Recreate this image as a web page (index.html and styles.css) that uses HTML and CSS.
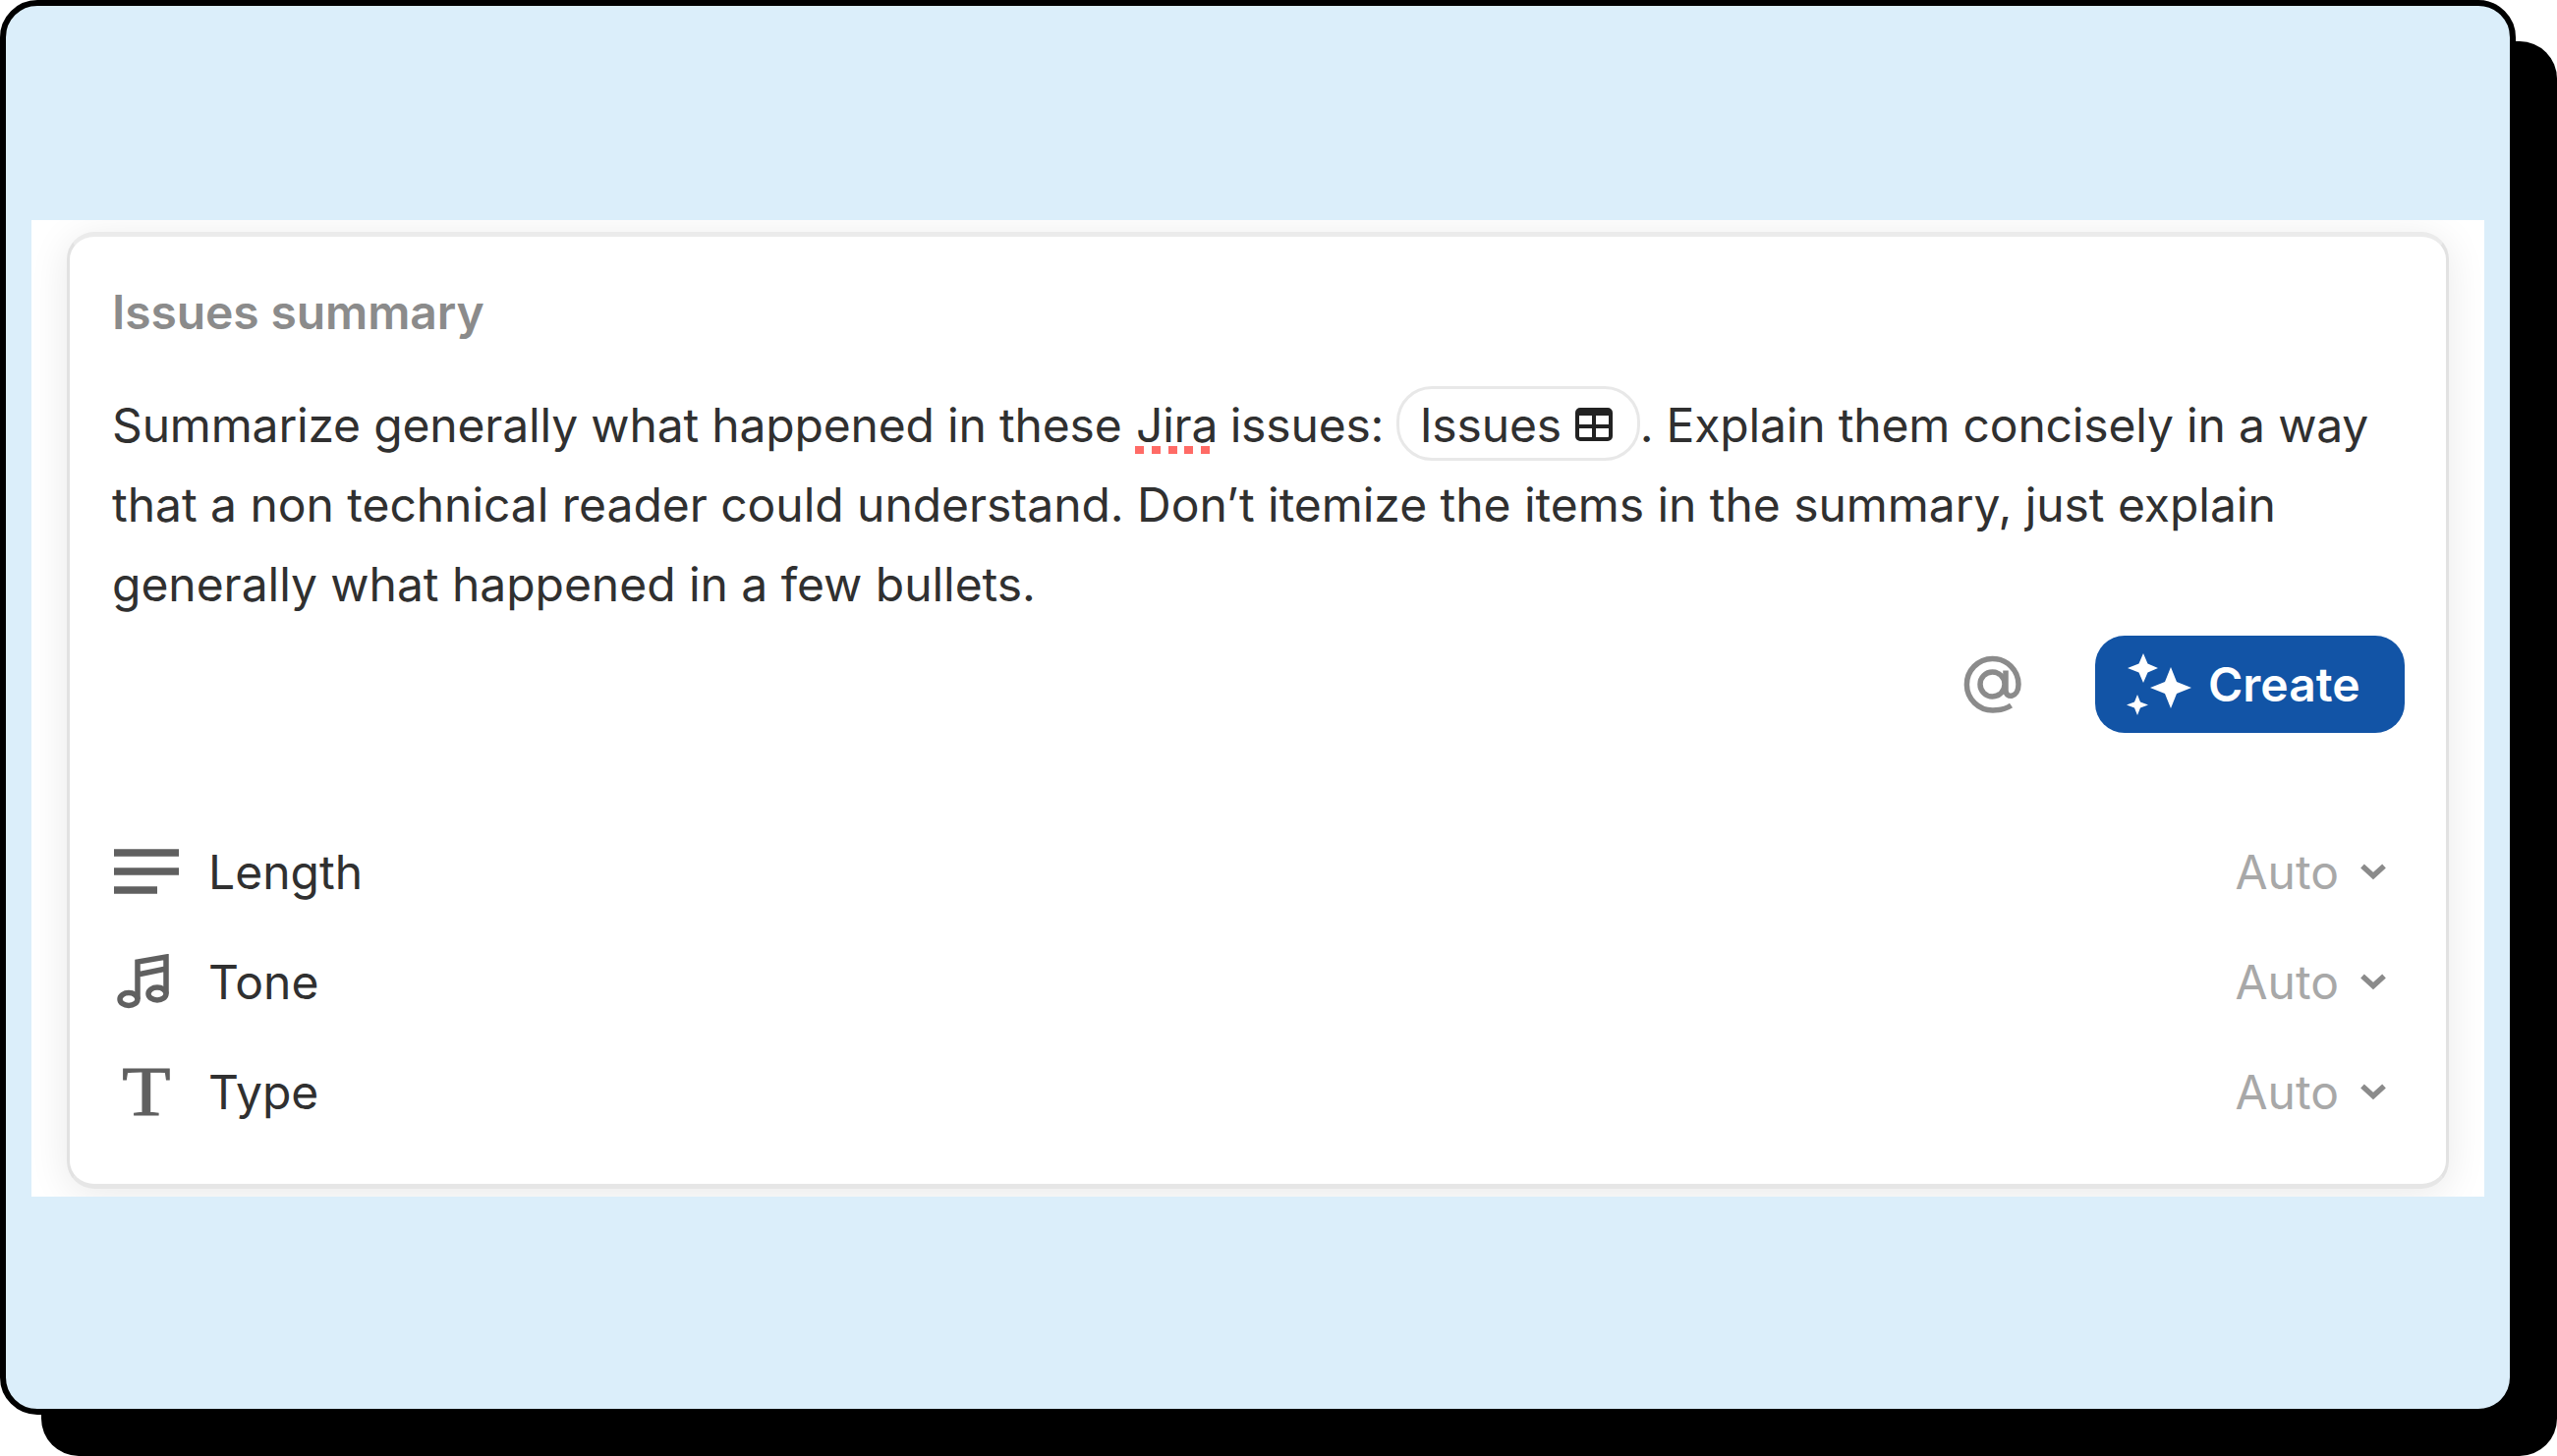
FILE: index.html
```html
<!DOCTYPE html>
<html lang="en">
<head>
    <meta charset="UTF-8">
    <meta name="viewport" content="width=device-width, initial-scale=1.0">
    <title>Issues summary</title>
    <link rel="stylesheet" href="styles.css">
</head>
<body>

    <div class="frame">
        <div class="panel">
            <div class="card">
                <h1>Issues summary</h1>
                <p class="prompt">
                    <span class="first">Summarize generally what happened in these <span class="misspelled">Jira</span> issues: <span class="chip">Issues<svg class="table-icon" viewBox="0 0 38 34"><rect x="2" y="2" width="34" height="30" rx="3" fill="none" stroke="currentColor" stroke-width="4"/><path d="M2 5h34" fill="none" stroke="currentColor" stroke-width="6"/><path d="M2 19h34M19 6v26" fill="none" stroke="currentColor" stroke-width="4"/></svg></span>. Explain them concisely in a way</span><br>
                    that a non technical reader could understand. Don’t itemize the items in the summary, just explain<br>
                    generally what happened in a few bullets.
                </p>

                <div class="actions">
                    <svg class="at-icon" viewBox="0 0 60 60" fill="none" stroke="currentColor" stroke-width="5.500">
                        <circle cx="29.5" cy="29.5" r="12.5"/>
                        <path d="M43 15.500v20c0 9 13 8 13-6A26.300 26.300 0 1 0 30 56q11 0 18.500-5"/>
                    </svg>
                    <button>
                        <svg class="sparkle-icon" viewBox="0 0 66 64" fill="currentColor">
                            <path d="M17 0l4.500 10.500L32 15l-10.500 4.500L17 30l-4.500-10.500L1 15l11.500-4.500z"/>
                            <path d="M45 14l6 15 15 6-15 6-6 15-6-15-15-6 15-6z"/>
                            <path d="M11 42l3 7.500 8 3-8 3L11 63l-3-7.500-8-3 8-3z"/>
                        </svg>
                        Create
                    </button>
                </div>

                <ul>
                    <li>
                        <span class="icon"><svg width="66" height="46" viewBox="0 0 66 46"><path d="M0 4h66M0 23h66M0 42h44" stroke="currentColor" stroke-width="7.500"/></svg></span>
                        <span class="name">Length</span>
                        <span class="value">Auto</span>
                        <svg class="chevron" viewBox="0 0 26 17"><path d="M2 2.500l11 10 11-10"/></svg>
                    </li>
                    <li>
                        <span class="icon"><svg width="66" height="56" viewBox="0 0 66 56" fill="none" stroke="currentColor" stroke-width="5.500"><ellipse cx="15" cy="46" rx="9" ry="6.500"/><ellipse cx="44" cy="40.500" rx="9" ry="6.500"/><path d="M24 46V8L53 3v37.500M24 21l29-6"/></svg></span>
                        <span class="name">Tone</span>
                        <span class="value">Auto</span>
                        <svg class="chevron" viewBox="0 0 26 17"><path d="M2 2.500l11 10 11-10"/></svg>
                    </li>
                    <li>
                        <span class="icon"><span class="type-icon">T</span></span>
                        <span class="name">Type</span>
                        <span class="value">Auto</span>
                        <svg class="chevron" viewBox="0 0 26 17"><path d="M2 2.500l11 10 11-10"/></svg>
                    </li>
                </ul>
            </div>
        </div>
    </div>

</body>
</html>
```
FILE: styles.css
```css
* {
    box-sizing: border-box;
}
body {
    font-family: Inter, "Liberation Sans", sans-serif;
    font-size: 48px;
    margin: 0;
    min-height: 1482px;
    background-color: #ffffff;
    color: #303030;
}
.frame {
    width: 2560px;
    height: 1440px;
    padding: 218px 26px;
    border: 6px solid #000;
    border-radius: 38px;
    background-color: #dbeefa;
    box-shadow: 42px 42px 0 #000;
}
.panel {
    height: 994px;
    padding: 12px 36px 8px 36px;
    background-color: #ffffff;
    overflow: hidden;
}
.card {
    height: 974px;
    padding: 47px 42px 0 43px;
    border: 3px solid #e2e2e2;
    border-top: 5px solid #ebebeb;
    border-bottom: 5px solid #e6e6e6;
    border-radius: 28px;
    background-color: #ffffff;
    box-shadow: 0 6px 40px rgba(0, 0, 0, 0.09);
}
h1 {
    margin: 0;
    font-size: 48px;
    font-weight: 600;
    line-height: 60px;
    letter-spacing: -0.1px;
    color: #8b8b8b;
}
.prompt {
    margin: 44px 0 0;
    line-height: 81px;
    letter-spacing: -0.04px;
    white-space: nowrap;
}
.first {
    letter-spacing: -0.17px;
}
.misspelled {
    position: relative;
    margin: 0 -1px 0 1px;
}
.misspelled::after {
    content: "";
    position: absolute;
    left: -1px;
    top: 51px;
    width: 77px;
    height: 8px;
    background: repeating-linear-gradient(90deg, #ff6b66 0 9px, transparent 9px 16.8px);
}
.chip {
    display: inline-flex;
    align-items: center;
    height: 76px;
    width: 248px;
    margin: 1px 0 0 -1px;
    padding: 3px 0 0 21px;
    border: 3px solid #e8e8e8;
    border-radius: 36px;
    vertical-align: top;
    line-height: 66px;
}
.table-icon {
    flex-shrink: 0;
    width: 38px;
    height: 34px;
    margin: 0 0 2px 14px;
    color: #222;
}
.actions {
    display: flex;
    align-items: center;
    justify-content: flex-end;
    gap: 74px;
    margin-top: 12px;
}
.at-icon {
    width: 60px;
    height: 60px;
    color: #8b8b8b;
}
button {
    display: flex;
    align-items: center;
    gap: 17px;
    width: 315px;
    height: 99px;
    padding: 0 0 0 32px;
    border: none;
    border-radius: 30px;
    background-color: #1254a6;
    color: #ffffff;
    font: 600 48px Inter, sans-serif;
}
.sparkle-icon {
    width: 66px;
    height: 64px;
}
ul {
    margin: 85px 0 0;
    padding: 0;
    list-style-type: none;
}
li {
    display: flex;
    align-items: center;
    height: 112px;
    padding-right: 19px;
}
.icon {
    display: flex;
    justify-content: center;
    width: 66px;
    margin: 0 30px 0 2px;
    color: #606060;
}
.type-icon {
    font-family: "Liberation Serif", serif;
    font-size: 72px;
    line-height: 80px;
    -webkit-text-stroke: 1px #606060;
    transform: scaleX(1.12);
}
.value {
    margin-left: auto;
    color: #a8a8a8;
}
.chevron {
    width: 26px;
    height: 17px;
    margin-left: 22px;
    fill: none;
    stroke: #8b8b8b;
    stroke-width: 5.5;
}
```
